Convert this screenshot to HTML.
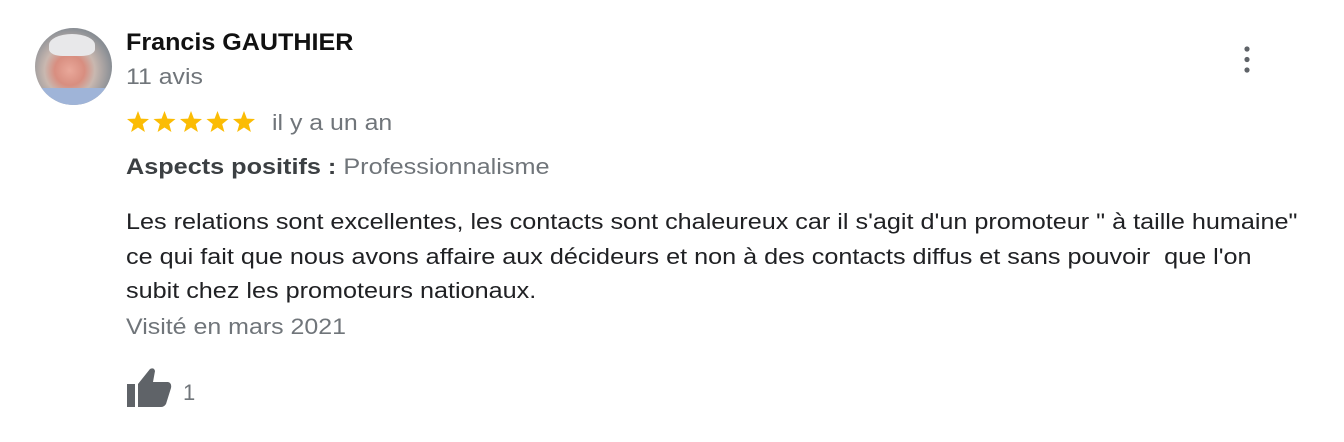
<!DOCTYPE html>
<html><head><meta charset="utf-8"><style>
body{margin:0;width:1344px;height:442px;background:#fff;font-family:"Liberation Sans",Arial,sans-serif;position:relative;overflow:hidden}
.a{position:absolute;white-space:nowrap;transform-origin:0 0}
.av{position:absolute;left:35px;top:28px;width:77px;height:77px;border-radius:50%;background:radial-gradient(circle at 45% 55%,#e9a89a 0,#d88e80 25%,#c9b8b0 42%,#8a8f95 70%,#6d6f70 100%);overflow:hidden}
</style></head><body>
<div class="av"><div style="position:absolute;left:14px;top:6px;width:46px;height:22px;border-radius:50% 50% 30% 30%;background:#e8e8ea"></div><div style="position:absolute;left:0;top:60px;width:77px;height:25px;background:#9fb4d8"></div></div>
<div class="a" style="left:126px;top:29px;font-size:24px;font-weight:bold;color:#111;transform:scaleX(1.046)">Francis GAUTHIER</div>
<div class="a" style="left:126px;top:64px;font-size:22px;color:#70757a;transform:scaleX(1.13)">11 avis</div>
<svg class="a" style="left:126px;top:110px" width="132" height="24" viewBox="0 0 132 24">
<g fill="#fbbc04"><path id="s" d="M12 1 L14.9 8.6 L23 9 L16.7 14.1 L18.9 22 L12 17.5 L5.1 22 L7.3 14.1 L1 9 L9.1 8.6 Z"/>
<use href="#s" x="26.5"/><use href="#s" x="53"/><use href="#s" x="79.5"/><use href="#s" x="106"/></g></svg>
<div class="a" style="left:272px;top:110px;font-size:22px;color:#70757a;transform:scaleX(1.13)">il y a un an</div>
<div class="a" style="left:126px;top:154px;font-size:22px;color:#3c4043;transform:scaleX(1.147)"><b>Aspects positifs :</b> <span style="color:#70757a">Professionnalisme</span></div>
<div class="a" style="left:126px;top:205px;font-size:22px;line-height:34.5px;color:#202124;transform:scaleX(1.145)">Les relations sont excellentes, les contacts sont chaleureux car il s'agit d'un promoteur " à taille humaine"<br>ce qui fait que nous avons affaire aux décideurs et non à des contacts diffus et sans pouvoir&nbsp; que l'on<br>subit chez les promoteurs nationaux.</div>
<div class="a" style="left:126px;top:314px;font-size:22px;color:#70757a;transform:scaleX(1.134)">Visité en mars 2021</div>
<svg class="a" style="left:126px;top:366px" width="46" height="42" viewBox="0 0 46 42"><rect x="1" y="18" width="8" height="23" fill="#5f6368"/><path d="M12 18 L24 3 Q28 1 29 5 L27 16 L42 16 Q46 17 45 22 L40 38 Q38 41 35 41 L12 41 Z" fill="#5f6368"/></svg>
<div class="a" style="left:183px;top:380px;font-size:22px;color:#70757a">1</div>
<svg class="a" style="left:1242px;top:46px" width="10" height="28"><circle cx="5" cy="3" r="2.6" fill="#5f6368"/><circle cx="5" cy="13.5" r="2.6" fill="#5f6368"/><circle cx="5" cy="24" r="2.6" fill="#5f6368"/></svg>
</body></html>
